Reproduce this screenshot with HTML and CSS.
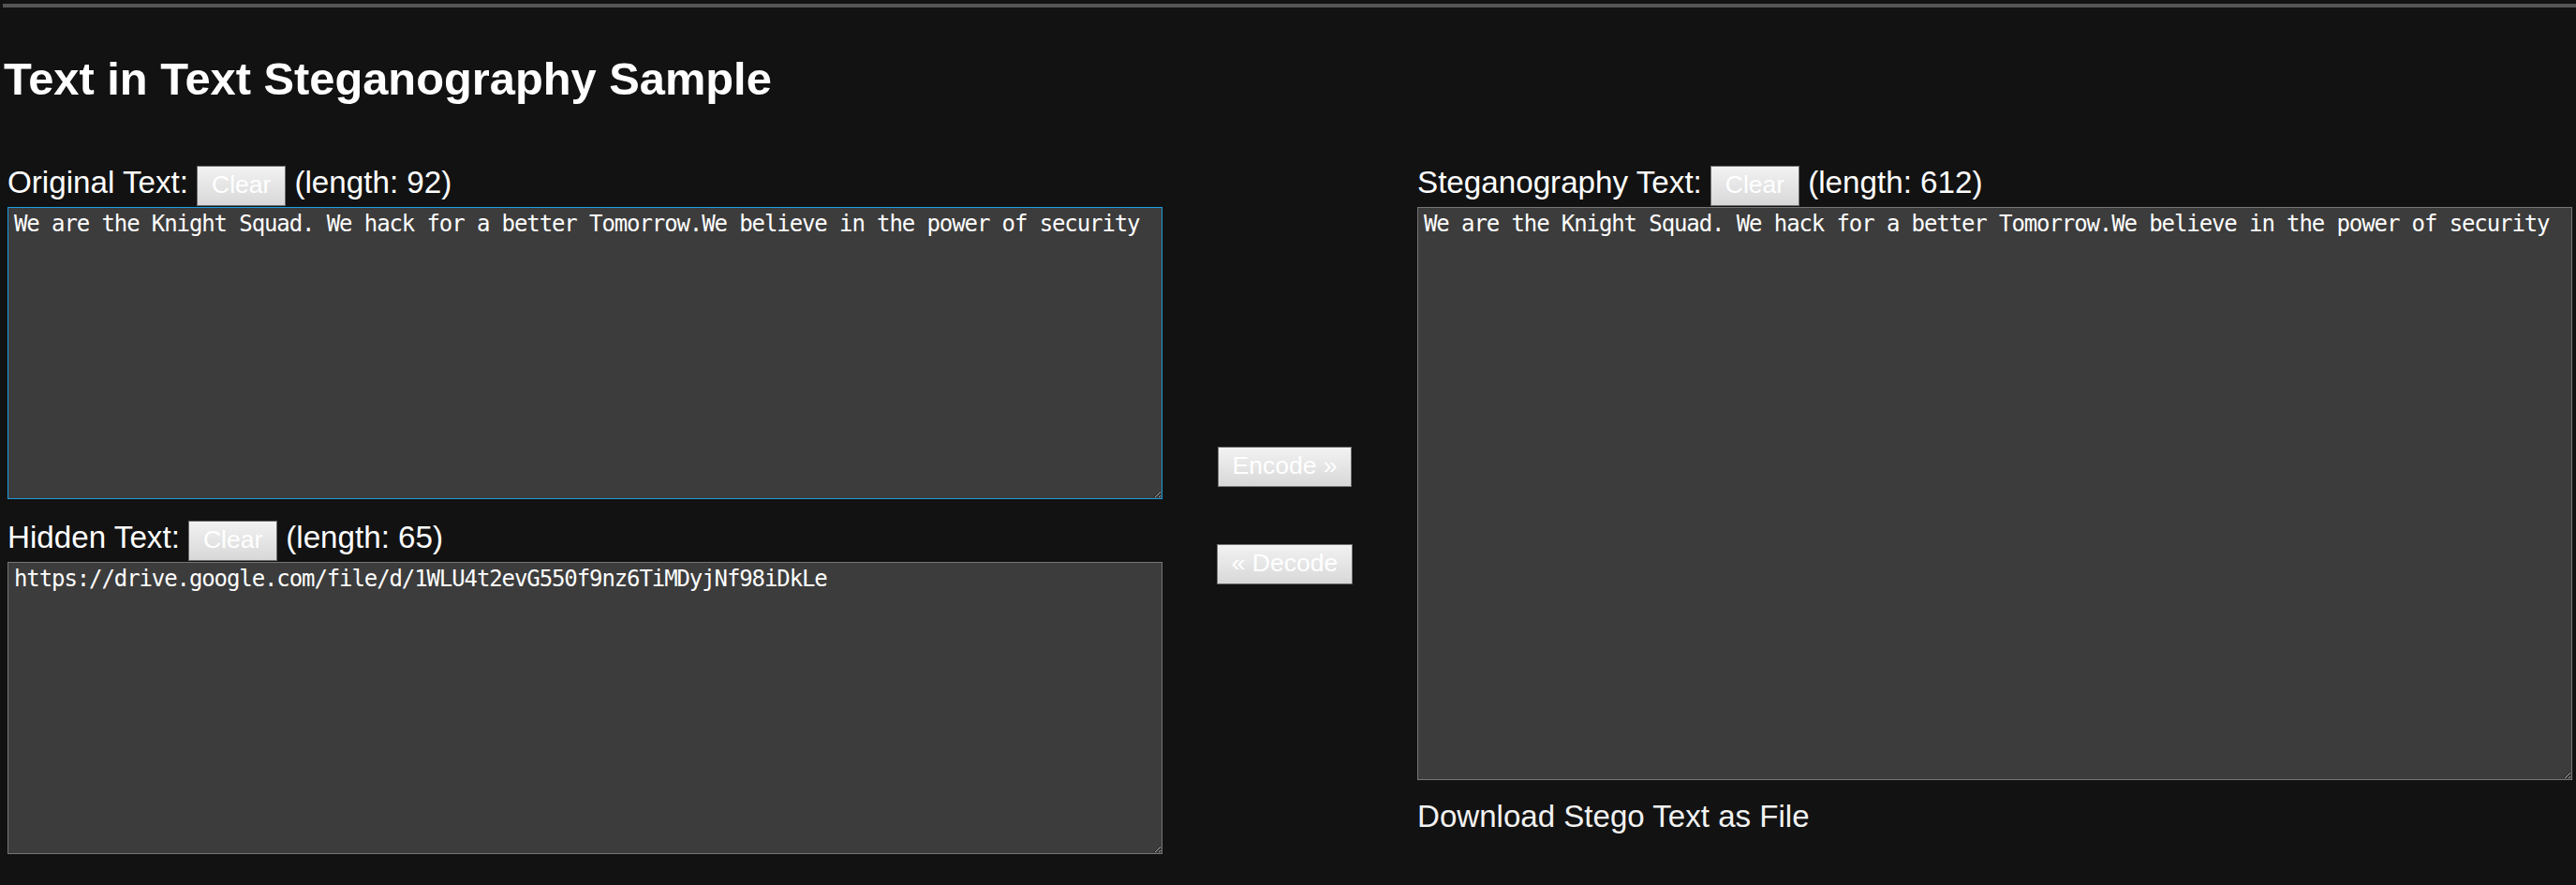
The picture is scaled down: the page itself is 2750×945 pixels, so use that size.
FILE: index.html
```html
<!DOCTYPE html>
<html lang="en">
<head>
<meta charset="utf-8">
<title>Text in Text Steganography Sample</title>
<link rel="stylesheet" href="styles.css">
</head>
<body>
<div class="topbar"></div>
<h1 class="title">Text in Text Steganography Sample</h1>
<div class="main">
  <div class="col side">
    <div class="label-row"><span>Original Text:</span><button class="btn">Clear</button><span>(length: 92)</span></div>
    <textarea class="ta ta-short ta-focus" spellcheck="false">We are the Knight Squad. We hack for a better Tomorrow.We believe in the power of security</textarea>
    <div class="label-row row-hidden"><span>Hidden Text:</span><button class="btn">Clear</button><span>(length: 65)</span></div>
    <textarea class="ta ta-short" spellcheck="false">https://drive.google.com/file/d/1WLU4t2evG550f9nz6TiMDyjNf98iDkLe</textarea>
  </div>
  <div class="col mid">
    <button class="btn btn-encode">Encode »</button>
    <button class="btn btn-decode">« Decode</button>
  </div>
  <div class="col side">
    <div class="label-row"><span>Steganography Text:</span><button class="btn">Clear</button><span>(length: 612)</span></div>
    <textarea class="ta ta-tall" spellcheck="false">We are the Knight Squad. We hack for a better Tomorrow.We believe in the power of security</textarea>
    <a class="download" href="#">Download Stego Text as File</a>
  </div>
</div>
</body>
</html>
```

FILE: styles.css
```css
html, body {
  margin: 0;
  padding: 0;
  background: #121212;
}
body {
  width: 2750px;
  height: 945px;
  overflow: hidden;
  font-family: "Liberation Sans", Arial, sans-serif;
  color: #ffffff;
}
.topbar {
  height: 4px;
  margin: 4px 0 0 3px;
  background: #555555;
}
.title {
  margin: 49px 0 0 4px;
  font-size: 48.8px;
  line-height: 54px;
  font-weight: bold;
  color: #ffffff;
}
.main {
  display: flex;
  margin-top: 65px;
  padding-left: 8px;
}
.col {
  display: flex;
  flex-direction: column;
}
.side {
  width: 1233px;
}
.mid {
  width: 272px;
  box-sizing: border-box;
  padding-right: 11px;
  align-items: center;
}
.label-row {
  display: flex;
  align-items: baseline;
  gap: 9px;
  height: 43px;
  font-size: 33.2px;
  line-height: 37px;
  color: #ffffff;
}
.row-hidden {
  margin-top: 22px;
}
.btn {
  box-sizing: border-box;
  height: 43px;
  margin: 0;
  padding: 0 15px 2px;
  border: 1px solid #707070;
  border-radius: 0;
  background: linear-gradient(#f2f2f2, #d8d8d8);
  color: #ffffff;
  font-family: "Liberation Sans", Arial, sans-serif;
  font-size: 26.5px;
  line-height: normal;
}
.btn-encode {
  margin-top: 301px;
}
.btn-decode {
  margin-top: 61px;
}
.ta {
  display: block;
  box-sizing: border-box;
  width: 1233px;
  margin: 2px 0 0;
  padding: 3px 6px;
  background: #3c3c3c;
  border: 1px solid #767676;
  border-radius: 0;
  color: #ffffff;
  font-family: "DejaVu Sans Mono", monospace;
  font-size: 24px;
  letter-spacing: -1.1px;
  line-height: 28px;
  resize: both;
  outline: none;
  overflow: hidden;
}
.ta-focus {
  border-color: #1e9de0;
}
.ta-short {
  height: 312px;
}
.ta-tall {
  height: 612px;
}
.download {
  display: block;
  margin-top: 20px;
  font-size: 33.1px;
  line-height: 37px;
  color: #f2f2f2;
  text-decoration: none;
}
```
